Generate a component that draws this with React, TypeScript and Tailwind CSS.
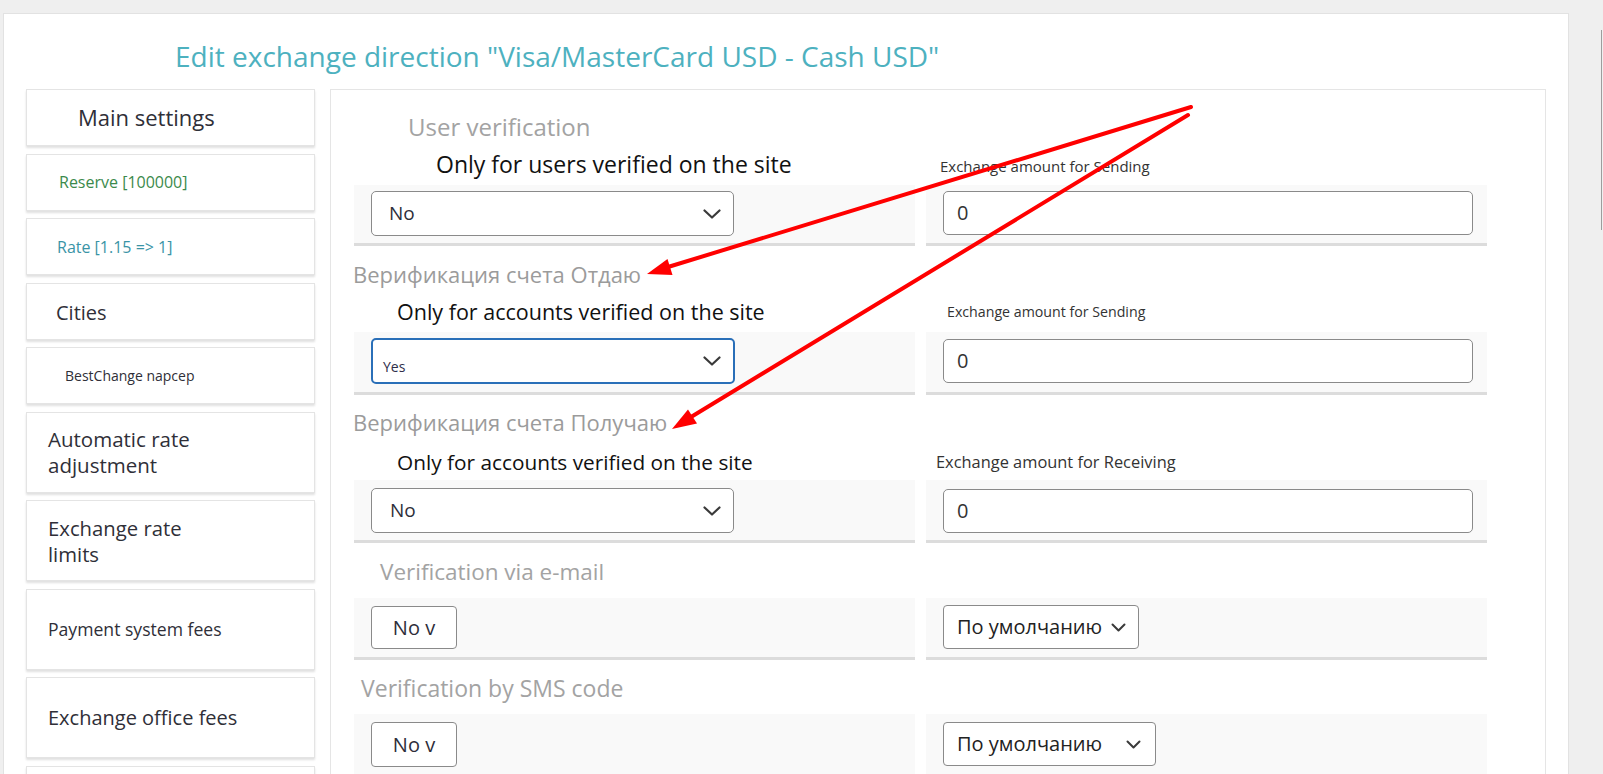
import React from 'react'

function Chevron({ small }: { small?: boolean }) {
  return small ? (
    <svg width="15" height="9" viewBox="0 0 15 9">
      <polyline points="1.5,1.5 7.5,7.5 13.5,1.5" fill="none" stroke="#3a3a3a" strokeWidth="2" strokeLinecap="round" strokeLinejoin="round" />
    </svg>
  ) : (
    <svg width="18" height="10" viewBox="0 0 18 10">
      <polyline points="1.5,1.5 9,8.5 16.5,1.5" fill="none" stroke="#3a3a3a" strokeWidth="2.2" strokeLinecap="round" strokeLinejoin="round" />
    </svg>
  )
}

function SideItem({ tall, className, children }: { tall?: boolean; className?: string; children?: React.ReactNode }) {
  return (
    <div
      className={`${tall ? 'h-[81px]' : 'h-[57px]'} flex items-center border border-[#e4e4e4] bg-white shadow-[0_2px_2px_rgba(0,0,0,0.12)] ${className ?? ''}`}
    >
      {children}
    </div>
  )
}

function Band({ className, children }: { className?: string; children?: React.ReactNode }) {
  return <div className={`bg-[#f9f9f9] border-b-[3px] border-[#dcdcdc] pl-[17px] ${className ?? ''}`}>{children}</div>
}

export default function App() {
  return (
    <div className="relative w-[1603px] h-[774px] overflow-hidden bg-[#efefef] flex pl-[3px] font-['Open_Sans',sans-serif]">
      {/* card */}
      <div className="mt-[13px] w-[1566px] h-[800px] bg-white border border-[#e2e2e2] pt-[22px] pl-[22px]">
        <h1 className="h-[40px] leading-[40px] text-[28px] text-[#4db1bf] pl-[149px]">
          Edit exchange direction "Visa/MasterCard USD - Cash USD"
        </h1>

        <div className="mt-[13px] flex gap-[15px]">
          {/* sidebar */}
          <div className="w-[289px] flex flex-col gap-[7.5px]">
            <SideItem className="pl-[51px] text-[22px] text-[#2f2f38]">Main settings</SideItem>
            <SideItem className="pl-[32px] text-[16px] text-[#3b8a4c]">Reserve [100000]</SideItem>
            <SideItem className="pl-[30px] text-[16px] text-[#3a94a6]">Rate [1.15 =&gt; 1]</SideItem>
            <SideItem className="pl-[29px] pt-[4px] text-[20px] text-[#2f2f38]">Cities</SideItem>
            <SideItem className="pl-[38px] text-[14px] text-[#2f2f38]">BestChange napcep</SideItem>
            <SideItem tall className="pl-[21px] text-[20.5px] leading-[26px] text-[#2f2f38]">
              <span>
                Automatic rate
                <br />
                adjustment
              </span>
            </SideItem>
            <SideItem tall className="pl-[21px] text-[20.3px] leading-[26px] text-[#2f2f38]">
              <span>
                Exchange rate
                <br />
                limits
              </span>
            </SideItem>
            <SideItem tall className="pl-[21px] text-[17.6px] text-[#2f2f38]">Payment system fees</SideItem>
            <SideItem tall className="pl-[21px] text-[20px] text-[#2f2f38]">Exchange office fees</SideItem>
            <SideItem tall />
          </div>

          {/* main panel */}
          <div className="w-[1216px] h-[700px] border border-[#e5e5e5] bg-white">
            {/* row 1 */}
            <div className="h-[56px] pt-[19px] pl-[77px] text-[24px] leading-[36px] text-[#a3a3a3]">User verification</div>
            <div className="grid grid-cols-[561px_561px] gap-x-[11px] pl-[23px] h-[39px]">
              <div className="pl-[82px] pt-[4px] text-[23px] leading-[28px] text-[#111]">Only for users verified on the site</div>
              <div className="pl-[14px] pt-[6px] text-[15px] leading-[28px] text-[#333]">Exchange amount for Sending</div>
            </div>
            <div className="grid grid-cols-[561px_561px] gap-x-[11px] pl-[23px]">
              <Band className="h-[61px] pt-[6px]">
                <div className="w-[363px] h-[45px] bg-white border border-[#8a8a8a] rounded-[5px] flex items-center justify-between pl-[17px] pr-[12px] text-[19px] text-[#2e2e3a]">
                  <span>No</span>
                  <Chevron />
                </div>
              </Band>
              <Band className="h-[61px] pt-[6px]">
                <div className="w-[530px] h-[44px] bg-white border border-[#8a8a8a] rounded-[5px] flex items-center pl-[13px] text-[20px] text-[#333]">0</div>
              </Band>
            </div>

            {/* row 2 */}
            <div className="h-[50px] pt-[10px] pl-[22px] text-[22px] leading-[36px] text-[#9b9b9b]">Верификация счета Отдаю</div>
            <div className="grid grid-cols-[561px_561px] gap-x-[11px] pl-[23px] h-[36px]">
              <div className="pl-[43px] pt-[2px] text-[21.5px] leading-[28px] text-[#111]">Only for accounts verified on the site</div>
              <div className="pl-[21px] pt-[2px] text-[14.2px] leading-[28px] text-[#333]">Exchange amount for Sending</div>
            </div>
            <div className="grid grid-cols-[561px_561px] gap-x-[11px] pl-[23px]">
              <Band className="h-[63px] pt-[6px] pl-[16px]">
                <div className="w-[364px] h-[46px] bg-white border-2 border-[#2a6fb8] rounded-[5px] flex items-center justify-between pl-[10px] pr-[12px] text-[14px] text-[#2e2e4a]">
                  <span className="pt-[10px]">Yes</span>
                  <Chevron />
                </div>
              </Band>
              <Band className="h-[63px] pt-[7px]">
                <div className="w-[530px] h-[44px] bg-white border border-[#8a8a8a] rounded-[5px] flex items-center pl-[13px] text-[20px] text-[#333]">0</div>
              </Band>
            </div>

            {/* row 3 */}
            <div className="h-[49px] pt-[9px] pl-[22px] text-[22px] leading-[36px] text-[#9b9b9b]">Верификация счета Получаю</div>
            <div className="grid grid-cols-[561px_561px] gap-x-[11px] pl-[23px] h-[36px]">
              <div className="pl-[43px] pt-[4px] text-[20.8px] leading-[28px] text-[#111]">Only for accounts verified on the site</div>
              <div className="pl-[10px] pt-[4px] text-[16.4px] leading-[28px] text-[#333]">Exchange amount for Receiving</div>
            </div>
            <div className="grid grid-cols-[561px_561px] gap-x-[11px] pl-[23px]">
              <Band className="h-[63px] pt-[8px]">
                <div className="w-[363px] h-[45px] bg-white border border-[#8a8a8a] rounded-[5px] flex items-center justify-between pl-[18px] pr-[12px] text-[19px] text-[#2e2e3a]">
                  <span>No</span>
                  <Chevron />
                </div>
              </Band>
              <Band className="h-[63px] pt-[9px]">
                <div className="w-[530px] h-[44px] bg-white border border-[#8a8a8a] rounded-[5px] flex items-center pl-[13px] text-[20px] text-[#333]">0</div>
              </Band>
            </div>

            {/* row 4 */}
            <div className="h-[55px] pt-[11px] pl-[49px] text-[22.5px] leading-[36px] text-[#a3a3a3]">Verification via e-mail</div>
            <div className="grid grid-cols-[561px_561px] gap-x-[11px] pl-[23px]">
              <Band className="h-[62px] pt-[8px]">
                <div className="w-[86px] h-[43px] bg-white border border-[#8a8a8a] rounded-[4px] flex items-center justify-center text-[20px] text-[#2e2e3a]">No v</div>
              </Band>
              <Band className="h-[62px] pt-[7px]">
                <div className="w-[196px] h-[44px] bg-white border border-[#8a8a8a] rounded-[4px] flex items-center justify-between pl-[13px] pr-[12px] text-[20px] text-[#222]">
                  <span>По умолчанию</span>
                  <Chevron small />
                </div>
              </Band>
            </div>

            {/* row 5 */}
            <div className="h-[54px] pt-[10px] pl-[30px] text-[23px] leading-[36px] text-[#a3a3a3]">Verification by SMS code</div>
            <div className="grid grid-cols-[561px_561px] gap-x-[11px] pl-[23px]">
              <Band className="h-[63px] pt-[8px]">
                <div className="w-[86px] h-[45px] bg-white border border-[#8a8a8a] rounded-[4px] flex items-center justify-center text-[20px] text-[#2e2e3a]">No v</div>
              </Band>
              <Band className="h-[63px] pt-[8px]">
                <div className="w-[213px] h-[44px] bg-white border border-[#8a8a8a] rounded-[4px] flex items-center justify-between pl-[13px] pr-[14px] text-[20px] text-[#222]">
                  <span>По умолчанию</span>
                  <Chevron small />
                </div>
              </Band>
            </div>
          </div>
        </div>
      </div>

      {/* right strip with scroll edge */}
      <div className="w-[34px] pt-[30px] flex justify-end pr-[1px]">
        <div className="w-px h-[200px] bg-[#9d9d9d]" />
      </div>

      {/* annotation arrows */}
      <svg className="absolute inset-0 pointer-events-none" width="1603" height="774" viewBox="0 0 1603 774">
        <line x1="1191" y1="107" x2="668" y2="267" stroke="#ff0000" strokeWidth="4" strokeLinecap="round" />
        <polygon points="647,274 672.5,275 667.5,259" fill="#ff0000" />
        <line x1="1188" y1="115" x2="691" y2="417" stroke="#ff0000" strokeWidth="4" strokeLinecap="round" />
        <polygon points="672,429 697,423.5 688,409.5" fill="#ff0000" />
      </svg>
    </div>
  )
}
